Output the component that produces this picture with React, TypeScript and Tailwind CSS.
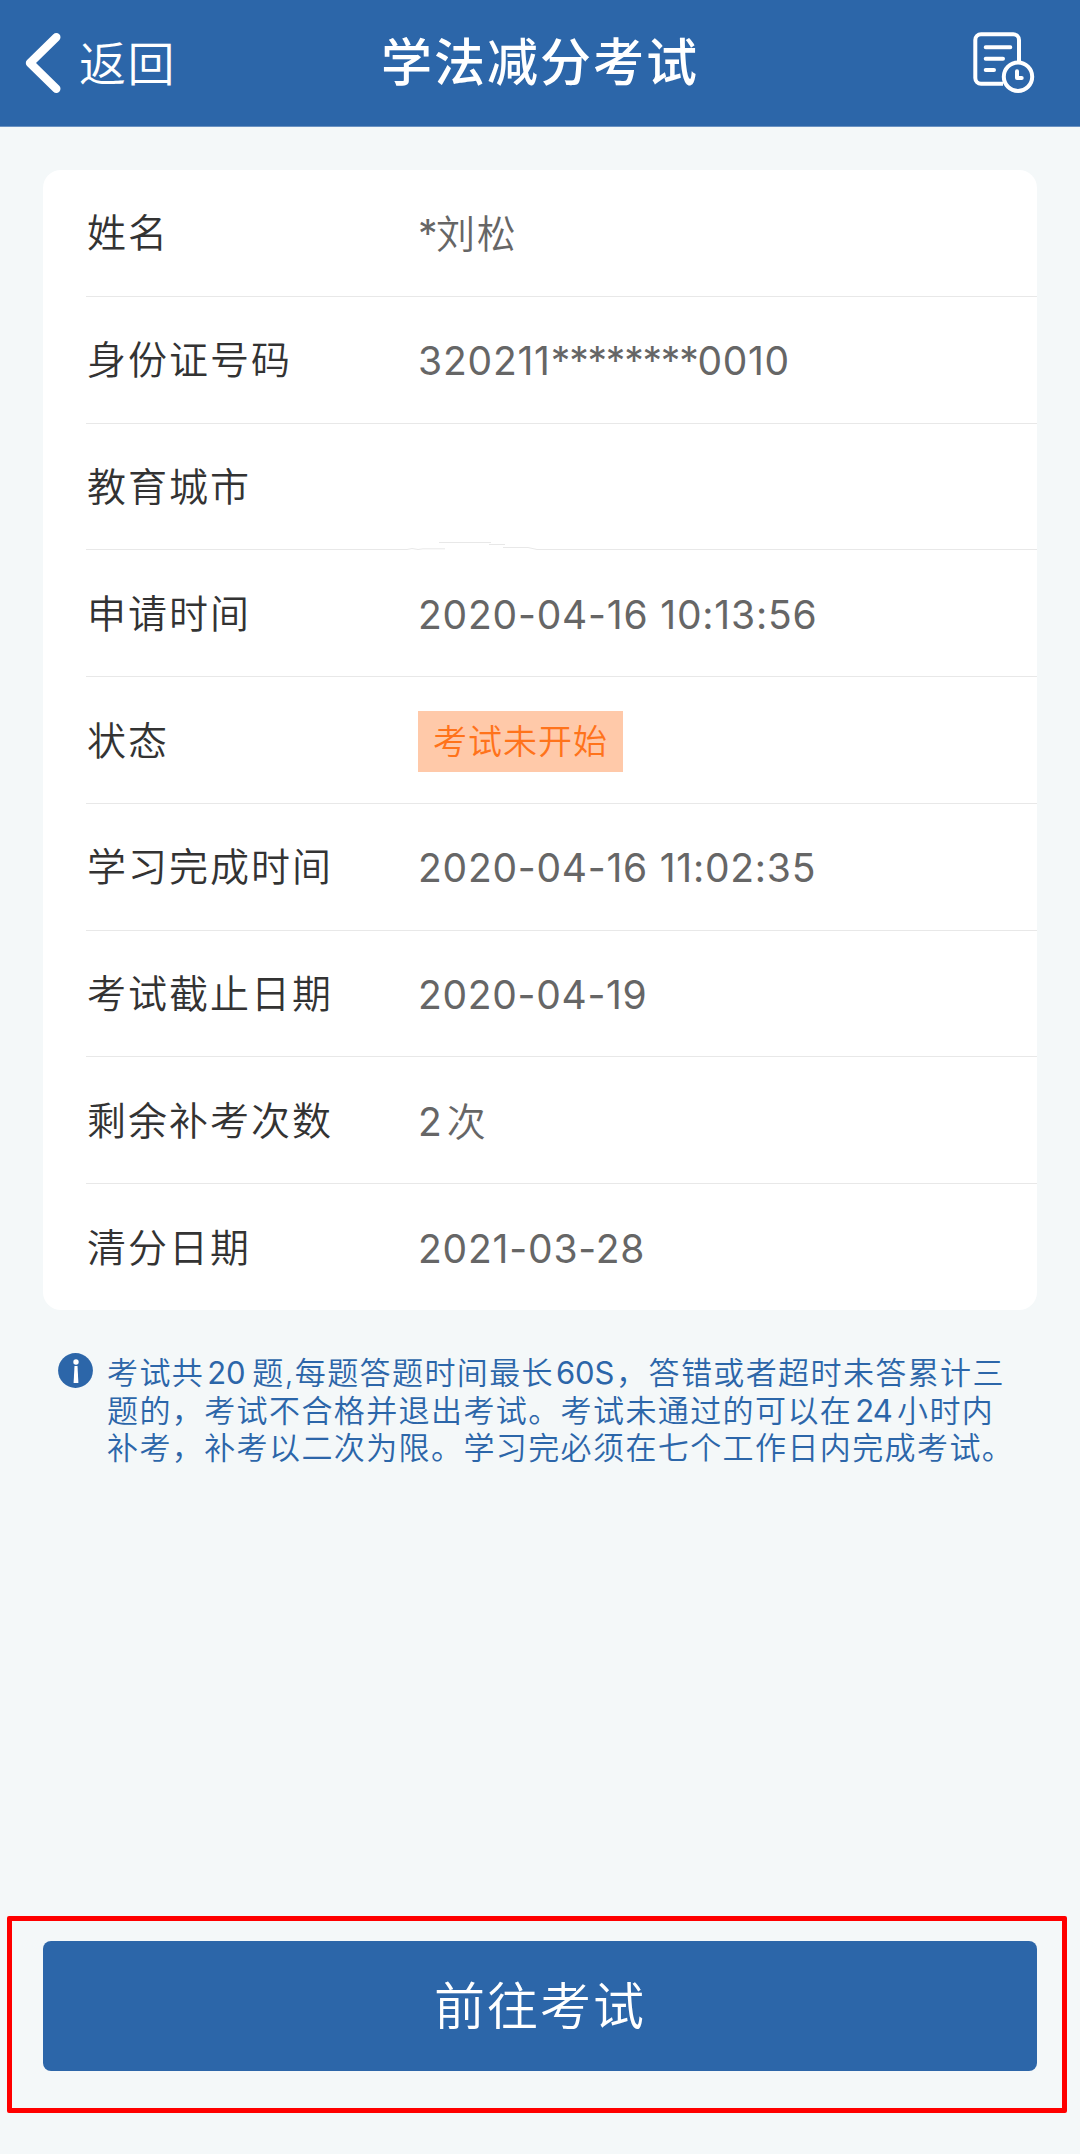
import type { ReactNode } from "react";

type Row = { label: string; value: ReactNode; cls?: string };

const rows: Row[] = [
  {
    label: "姓名",
    value: (
      <>
        <span className="tracking-[-1.5px]">*</span>
        <span className="font-[350] tracking-[1.7px]">刘松</span>
      </>
    ),
  },
  {
    label: "身份证号码",
    value: (
      <>
        <span className="tracking-[0.8px]">320211</span>
        <span className="tracking-[-1.2px]">********</span>
        <span className="tracking-[0.6px]">0010</span>
      </>
    ),
  },
  { label: "教育城市", value: "" },
  { label: "申请时间", value: "2020-04-16 10:13:56", cls: "tracking-[0.8px]" },
  {
    label: "状态",
    value: (
      <span className="flex h-[61px] w-[205px] items-center justify-center bg-[#ffc9a9] text-[34px] font-[350] leading-none tracking-[1px] text-[#ff731b]">
        考试未开始
      </span>
    ),
  },
  { label: "学习完成时间", value: "2020-04-16 11:02:35", cls: "tracking-[0.75px]" },
  { label: "考试截止日期", value: "2020-04-19", cls: "tracking-[0.7px]" },
  {
    label: "剩余补考次数",
    value: (
      <>
        2<span className="ml-[5px] font-[350]">次</span>
      </>
    ),
  },
  { label: "清分日期", value: "2021-03-28", cls: "tracking-[0.8px]" },
];

function BackIcon() {
  return (
    <svg width="40" height="64" viewBox="0 0 40 64" fill="none" stroke="#fff" strokeWidth="8.4" strokeLinecap="round" strokeLinejoin="round">
      <path d="M32.3 6.2 6 32l26.3 25.8" />
    </svg>
  );
}

function RecordIcon() {
  return (
    <svg width="66" height="66" viewBox="0 0 66 66" fill="none" stroke="#fff" strokeWidth="4" strokeLinecap="round" strokeLinejoin="round">
      <path d="M33 56.7H11a5.7 5.7 0 0 1-5.7-5.7V13A5.7 5.7 0 0 1 11 7.3h32.300A5.700 5.700 0 0 1 49 13v21.500" strokeLinecap="butt" />
      <path d="M15.700 20.300h24.600M15.700 31.700h17.300M15.700 43h8.300" />
      <circle cx="48" cy="49.700" r="14.200" />
      <path d="M47 44.300v6.700h4.700" />
    </svg>
  );
}

function InfoIcon() {
  return (
    <svg width="35" height="35" viewBox="0 0 35 35" fill="#fff">
      <circle cx="17.500" cy="17.500" r="17.400" fill="#2c66a9" />
      <circle cx="18" cy="9" r="2.700" />
      <path d="M16.500 13h3l.9 17h-4.800z" />
    </svg>
  );
}

/* Uneven stretch of the rule under the city row */
function BrokenRule() {
  return (
    <svg className="absolute -bottom-px left-[317px]" width="134" height="10" viewBox="0 0 134 10" fill="none">
      <path d="M0 9.500h134" stroke="#fff" strokeWidth="2" />
      <path d="M0 9.500h4l5-1 6 1 5-.700h22M36 2.500h52M86 4.500h16M100 7.500h25l9 2" stroke="#e8e8e8" />
    </svg>
  );
}

export default function App() {
  return (
    <div className="flex h-[2154px] w-[1080px] flex-col overflow-hidden bg-[#f4f8f9] font-['Inter','Noto_Sans_CJK_SC',sans-serif]">
      <header className="grid h-[127px] shrink-0 grid-cols-[300px_1fr_300px] items-center border-b border-[#6a92c2] bg-[#2c66a9] text-white">
        <button className="flex items-center pl-6 text-left">
          <BackIcon />
          <span className="ml-[15px] pt-0.5 text-[47px] font-[350] leading-[60px] tracking-[1.5px]">返回</span>
        </button>
        <h1 className="whitespace-nowrap text-center text-[51px] font-medium leading-[60px] tracking-[2px]">学法减分考试</h1>
        <button className="flex justify-end pb-1.5 pr-11">
          <RecordIcon />
        </button>
      </header>

      <main className="flex flex-1 flex-col pt-[43px]">
        <section className="mx-[43px] flex h-[1140px] flex-col rounded-[18px] bg-white pl-[43px]">
          {rows.map((r, i) => (
            <div
              key={r.label}
              className={
                "relative flex flex-1 items-center text-[39px] leading-[56px]" +
                (i < rows.length - 1 ? " border-b border-[#e8e8e8]" : "")
              }
            >
              <div className="w-[332px] whitespace-nowrap pl-px pt-px font-[350] tracking-[2px] text-[#333]">{r.label}</div>
              <div className={"whitespace-nowrap pt-[3px] text-[#666] " + (r.cls ?? "")}>{r.value}</div>
              {i === 2 && <BrokenRule />}
            </div>
          ))}
        </section>

        <section className="mt-[43px] flex pl-[58px] text-[#2c66a9]">
          <InfoIcon />
          <p className="ml-[14px] mt-px whitespace-nowrap text-[31px] font-[350] leading-[37.6px] tracking-[1.4px]">
            <span className="block">
              考试共<span className="ml-[3px] mr-[7px] font-normal tracking-[-0.2px]">20</span>题,每题答题时间最长
              <span className="ml-0.5 mr-0.5 font-normal tracking-[-0.2px]">60S</span>，答错或者超时未答累计三
            </span>
            <span className="block">
              题的，考试不合格并退出考试。考试未通过的可以在
              <span className="ml-[3px] mr-[5px] font-normal tracking-[-0.8px]">24</span>小时内
            </span>
            <span className="block">补考，补考以二次为限。学习完必须在七个工作日内完成考试。</span>
          </p>
        </section>

        <div className="mb-[41px] ml-[7px] mr-[13px] mt-auto h-[197px] rounded-[2px] border-[5px] border-[#ff0000] pl-[31px] pr-[25px] pt-5">
          <button className="flex h-[130px] w-full items-center justify-center rounded-lg bg-[#2c66a9] text-[51px] font-[350] leading-none tracking-[2px] text-white">
            前往考试
          </button>
        </div>
      </main>
    </div>
  );
}
